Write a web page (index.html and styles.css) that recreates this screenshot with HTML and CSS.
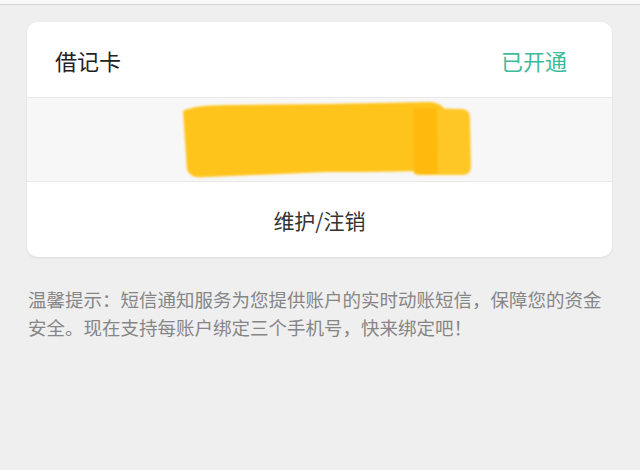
FILE: index.html
```html
<!DOCTYPE html>
<html lang="zh-CN">
<head>
<meta charset="utf-8">
<title>借记卡</title>
<link rel="stylesheet" href="styles.css">
</head>
<body>
<div class="topbar"></div>
<main class="page">
  <section class="card">
    <div class="card-head">
      <span class="card-title">借记卡</span>
      <span class="card-status">已开通</span>
    </div>
    <div class="card-mask">
      <svg class="blob" width="585" height="83" viewBox="0 0 585 83" xmlns="http://www.w3.org/2000/svg">
        <defs>
          <filter id="soft" x="-5%" y="-20%" width="110%" height="140%">
            <feGaussianBlur stdDeviation="1.3"/>
          </filter>
        </defs>
        <g filter="url(#soft)">
          <path d="M156,13 Q168,7 200,7 L300,6 L404,4 Q414,5 418,12 L420,72 Q380,74 300,74 L178,79 Q164,81 160,72 Z" fill="#ffc41a"/>
          <path d="M388,10 L436,11 Q443,12 443,20 L444,70 Q443,77 436,77 L392,77 Q386,76 386,70 Z" fill="#ffc726"/>
          <path d="M386,10 L410,10 L411,76 L387,76 Z" fill="#ffba10"/>
        </g>
      </svg>
    </div>
    <div class="card-action">维护/注销</div>
  </section>
  <p class="tips">温馨提示：短信通知服务为您提供账户的实时动账短信，保障您的资金安全。现在支持每账户绑定三个手机号，快来绑定吧！</p>
</main>
</body>
</html>
```

FILE: styles.css
```css
html, body {
  margin: 0;
  padding: 0;
}
body {
  background: #efefef;
  font-family: "Noto Sans CJK SC", "Noto Sans", sans-serif;
  width: 640px;
  height: 470px;
  overflow: hidden;
}
.topbar {
  height: 4px;
  background: #f8f8f8;
  border-bottom: 1px solid #d6d6d6;
}
.page {
  padding: 17px 28px 0 27px;
}
.card {
  background: #fff;
  border-radius: 11px;
  overflow: hidden;
  box-shadow: 0 1px 3px rgba(0, 0, 0, 0.08);
}
.card-head {
  height: 75px;
  display: flex;
  align-items: center;
  justify-content: space-between;
  padding: 0 45px 0 28px;
  border-bottom: 1px solid #e9e9e9;
}
.card-title {
  font-size: 22px;
  color: #222;
}
.card-status {
  font-size: 22px;
  color: #3dbb9c;
}
.card-mask {
  height: 83px;
  background: #f7f7f7;
  border-bottom: 1px solid #e9e9e9;
}
.blob {
  display: block;
}
.card-action {
  height: 75px;
  display: flex;
  align-items: center;
  justify-content: center;
  font-size: 21px;
  color: #333;
}
.tips {
  margin: 28px -2px 0 1px;
  font-size: 18.5px;
  line-height: 28px;
  color: #868686;
}
```
